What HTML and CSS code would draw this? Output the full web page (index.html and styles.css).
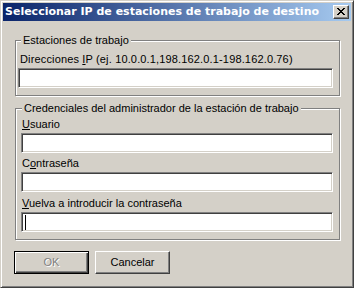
FILE: index.html
```html
<!DOCTYPE html>
<html lang="es">
<head>
<meta charset="utf-8">
<title>Seleccionar IP de estaciones de trabajo de destino</title>
<link rel="stylesheet" href="styles.css">
</head>
<body>
<div class="window">
  <div class="titlebar">
    <span class="title">Seleccionar IP de estaciones de trabajo de destino</span>
    <span class="close-btn">
      <svg width="8" height="7" viewBox="0 0 8 7" shape-rendering="crispEdges">
        <path fill="#000" d="M0 0h2v1H0zM6 0h2v1H6zM1 1h2v1H1zM5 1h2v1H5zM2 2h4v1H2zM3 3h2v1H3zM2 4h4v1H2zM1 5h2v1H1zM5 5h2v1H5zM0 6h2v1H0zM6 6h2v1H6z"/>
      </svg>
    </span>
  </div>
  <div class="client">
    <div class="group group-ws">
      <span class="legend">Estaciones de trabajo</span>
      <div class="label label-ip">Direcciones <u>I</u>P (ej. 10.0.0.1,198.162.0.1-198.162.0.76)</div>
      <div class="input input-ip"></div>
    </div>
    <div class="group group-cred">
      <span class="legend">Credenciales del administrador de la estación de trabajo</span>
      <div class="label label-cred"><u>U</u>suario</div>
      <div class="input input-cred"></div>
      <div class="label label-cred gap4">C<u>o</u>ntraseña</div>
      <div class="input input-cred"></div>
      <div class="label label-cred gap5"><u>V</u>uelva a introducir la contraseña</div>
      <div class="input input-cred"><span class="caret"></span></div>
    </div>
    <div class="buttons">
      <div class="btn btn-default btn-disabled"><span>OK</span></div>
      <div class="btn">Cancelar</div>
    </div>
  </div>
</div>
</body>
</html>
```
FILE: styles.css
```css
* { box-sizing: border-box; }
html, body { margin: 0; padding: 0; background: #d4d0c8; }
body {
  font-family: "Liberation Sans", Arial, sans-serif;
  font-size: 11px;
  line-height: 13px;
  color: #000;
}
.window {
  width: 354px;
  height: 288px;
  background: #d4d0c8;
  border: 1px solid;
  border-color: #d4d0c8 #404040 #404040 #d4d0c8;
  box-shadow: inset 1px 1px 0 #fff, inset -1px -1px 0 #808080;
  padding: 2px;
  display: flex;
  flex-direction: column;
}
.titlebar {
  height: 18px;
  background: linear-gradient(to right, #0a246a, #a6caf0);
  display: flex;
  align-items: center;
  justify-content: space-between;
  padding: 0 2px 0 2px;
}
.title {
  font-family: "DejaVu Sans", Verdana, sans-serif;
  font-weight: bold;
  font-size: 11px;
  line-height: 18px;
  color: #fff;
  white-space: nowrap;
}
.close-btn {
  width: 16px;
  height: 14px;
  background: #d4d0c8;
  border: 1px solid;
  border-color: #fff #404040 #404040 #fff;
  box-shadow: inset -1px -1px 0 #808080;
  display: flex;
  align-items: flex-start;
  justify-content: flex-start;
  padding: 2px 0 0 3px;
}
.close-btn svg { display: block; }
.client {
  display: flex;
  flex-direction: column;
  padding-left: 12px;
}
.group {
  position: relative;
  width: 325px;
  border: 1px solid #808080;
  box-shadow: inset 1px 1px 0 #fff, 1px 1px 0 #fff;
  display: flex;
  flex-direction: column;
  align-items: flex-start;
  padding-bottom: 7px;
}
.group-ws { margin-top: 19px; padding-top: 12px; }
.group-cred { margin-top: 12px; padding-top: 9px; }
.legend {
  position: absolute;
  top: -7px;
  left: 5px;
  background: #d4d0c8;
  padding: 0 2px;
  line-height: 13px;
  white-space: nowrap;
}
.group-cred .legend { left: 6px; }
.label { height: 13px; white-space: nowrap; margin-bottom: 2px; }
.label-ip { padding-left: 4px; letter-spacing: 0.15px; }
.label-cred { padding-left: 6px; }
.gap4 { margin-top: 4px; }
.gap5 { margin-top: 5px; }
.input {
  height: 20px;
  background: #fff;
  border: 1px solid;
  border-color: #808080 #fff #fff #808080;
  box-shadow: inset 1px 1px 0 #404040, inset -1px -1px 0 #d4d0c8;
  padding: 2px 0 0 2px;
}
.input-ip { width: 315px; margin-left: 2px; }
.input-cred { width: 312px; margin-left: 5px; }
.caret {
  display: block;
  width: 1px;
  height: 15px;
  margin-left: 1px;
  background: #000;
}
.buttons {
  display: flex;
  gap: 6px;
  margin-top: 11px;
  margin-left: -1px;
}
.btn {
  width: 75px;
  height: 23px;
  border: 1px solid;
  border-color: #fff #404040 #404040 #fff;
  box-shadow: inset -1px -1px 0 #808080;
  display: flex;
  align-items: center;
  justify-content: center;
}
.btn-default {
  border-color: #000;
  box-shadow: inset 1px 1px 0 #fff, inset -1px -1px 0 #404040, inset -2px -2px 0 #808080;
}
.btn-disabled { color: #808080; text-shadow: 1px 1px 0 #fff; }
```
